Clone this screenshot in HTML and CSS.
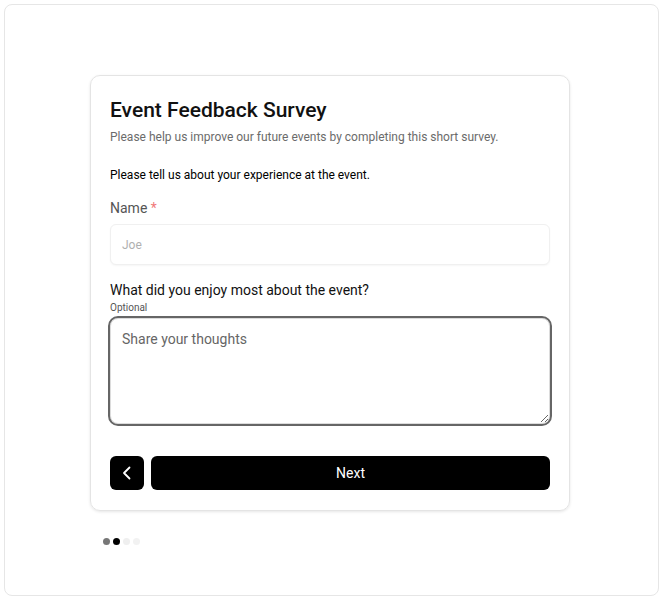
FILE: index.html
```html
<!DOCTYPE html>
<html lang="en">
<head>
<meta charset="utf-8">
<title>Event Feedback Survey</title>
<link rel="stylesheet" href="styles.css">
</head>
<body>
<div class="frame">
  <div class="wrap">
    <form class="card">
      <h1 class="title">Event Feedback Survey</h1>
      <p class="subtitle">Please help us improve our future events by completing this short survey.</p>
      <p class="intro">Please tell us about your experience at the event.</p>
      <label class="label-name">Name <span class="req">*</span></label>
      <input class="text-input" type="text" placeholder="Joe">
      <div class="q-label">What did you enjoy most about the event?</div>
      <div class="optional">Optional</div>
      <textarea class="area" placeholder="Share your thoughts"></textarea>
      <div class="actions">
        <button type="button" class="back" aria-label="Back">
          <svg width="16" height="16" viewBox="0 0 16 16"><path d="M10.5 2.5 L5 8 L10.5 13.5" fill="none" stroke="#fff" stroke-width="1.8" stroke-linecap="round" stroke-linejoin="round"/></svg>
        </button>
        <button type="button" class="next">Next</button>
      </div>
    </form>
    <div class="dots">
      <span class="dot d1"></span><span class="dot d2"></span><span class="dot d3"></span><span class="dot d4"></span>
    </div>
  </div>
</div>
</body>
</html>
```
FILE: styles.css
```css
* { box-sizing: border-box; }
html, body { margin: 0; padding: 0; background: #fff; }
body {
  font-family: Roboto, "Noto Sans", sans-serif;
  color: #111;
  padding: 4px;
}
.frame {
  height: 592px;
  border: 1px solid #e6e6e6;
  border-radius: 8px;
  padding-top: 70px;
}
.wrap {
  width: 480px;
  margin-left: 85px;
}
.card {
  border: 1px solid #e4e4e4;
  border-radius: 10px;
  box-shadow: 0 1px 3px rgba(0,0,0,0.10);
  padding: 20px 19px 20px 19px;
  display: flex;
  flex-direction: column;
}
.title {
  margin: 0;
  font-size: 21px;
  font-weight: 500;
  line-height: 28px;
  color: #111;
}
.subtitle {
  margin: 4px 0 0;
  font-size: 12px;
  line-height: 18px;
  color: #6b6b6b;
}
.intro {
  margin: 20px 0 0;
  font-size: 12px;
  line-height: 18px;
  color: #000;
}
.label-name {
  margin-top: 14px;
  font-size: 14px;
  line-height: 20px;
  color: #555;
}
.req { color: #f07a7a; }
.text-input {
  margin-top: 6px;
  height: 41px;
  width: 100%;
  border: 1px solid #f0f0f0;
  border-radius: 6px;
  box-shadow: 0 1px 2px rgba(0,0,0,0.04);
  padding: 0 11px;
  font-family: inherit;
  font-size: 12px;
  color: #111;
  outline: none;
}
.text-input::placeholder { color: #b0b0b0; }
.q-label {
  margin-top: 16px;
  font-size: 14px;
  line-height: 18px;
  color: #111;
}
.optional {
  margin-top: 1px;
  font-size: 10px;
  line-height: 16px;
  color: #555;
}
.area {
  margin-top: 2px;
  width: 100%;
  height: 106px;
  border: 1px solid #dcdcdc;
  border-radius: 8px;
  outline: 2px solid #666;
  outline-offset: 0;
  padding: 10px 11px;
  font-family: inherit;
  font-size: 14px;
  line-height: 20px;
  resize: vertical;
  display: block;
}
.area::placeholder { color: #666; }
.actions {
  margin-top: 32px;
  display: flex;
  gap: 7px;
  height: 34px;
}
.back {
  width: 34px;
  height: 34px;
  border: none;
  border-radius: 6px;
  background: #000;
  display: flex;
  align-items: center;
  justify-content: center;
  padding: 0;
}
.next {
  flex: 1;
  height: 34px;
  border: none;
  border-radius: 6px;
  background: #000;
  color: #fff;
  font-family: inherit;
  font-size: 14px;
  font-weight: 400;
}
.dots {
  display: flex;
  gap: 3px;
  margin-top: 27px;
  padding-left: 13px;
}
.dot {
  width: 7px;
  height: 7px;
  border-radius: 50%;
}
.d1 { background: #777; }
.d2 { background: #000; }
.d3 { background: #efefef; }
.d4 { background: #f2f2f2; }
```
